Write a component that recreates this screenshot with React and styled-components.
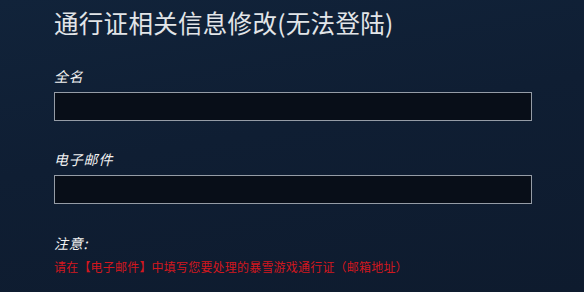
import styled, { createGlobalStyle } from "styled-components"

const Global = createGlobalStyle`
  html, body {
    margin: 0;
    padding: 0;
    height: 100%;
  }
  body {
    background: #0f1c2e;
    font-family: "Noto Sans CJK SC", "Noto Sans", sans-serif;
  }
`

export default function App() {
    return (
        <>
            <Global />
            <Page>
                <Title>通行证相关信息修改(无法登陆)</Title>
                <Field>
                    <Label>全名</Label>
                    <Input type="text" />
                </Field>
                <Field>
                    <Label>电子邮件</Label>
                    <Input type="text" />
                </Field>
                <Notice>
                    <Label>注意:</Label>
                    <Warning>请在【电子邮件】中填写您要处理的暴雪游戏通行证（邮箱地址）</Warning>
                </Notice>
            </Page>
        </>
    )
}

const Page = styled.main`
width: 584px;
height: 292px;
box-sizing: border-box;
padding: 8px 52px 0 54px;
background: linear-gradient(170deg, #11233a 0%, #0f1e33 45%, #0e1b2e 100%);
display: flex;
flex-direction: column;
overflow: hidden;
`

const Title = styled.h1`
margin: 0 0 29px;
font-size: 24.5px;
line-height: 30px;
font-weight: 400;
letter-spacing: 0.3px;
color: #e2e5e8;
`

const Field = styled.div`
display: flex;
flex-direction: column;
gap: 7px;
margin-bottom: 29px;
`

const Label = styled.label`
font-size: 14px;
line-height: 18px;
font-style: italic;
letter-spacing: 0.8px;
color: #f2f2f2;
`

const Input = styled.input`
box-sizing: border-box;
width: 478px;
height: 29px;
margin: 0;
background: #080e18;
border: 1px solid #959ca6;
outline: none;
color: #fff;
`

const Notice = styled.div`
display: flex;
flex-direction: column;
gap: 7px;
margin-top: 1px;
`

const Warning = styled.p`
margin: 0;
font-size: 12px;
line-height: 16px;
letter-spacing: 0.2px;
color: #d2171e;
`
